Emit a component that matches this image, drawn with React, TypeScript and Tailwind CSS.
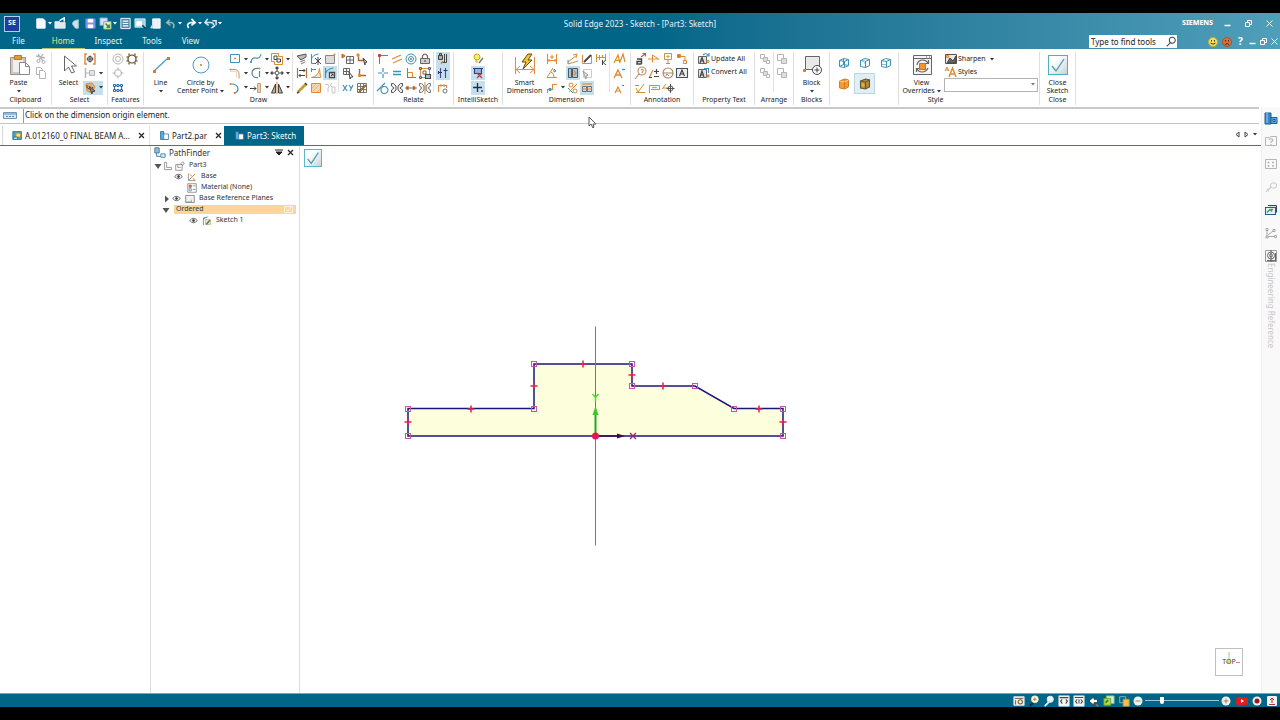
import { useState } from "react";
import type { ReactNode } from "react";

// [path, stroke, fill, strokeWidth]
type Shape = [string, string, string?, number?];

const O = "#dd8a33";
const B = "#3c93b8";
const K = "#444444";
const G = "#b5b5b5";
const N = "none";
const W = "#ffffff";

// Ribbon glyphs, all drawn on a 14x14 grid
const ICONS: Record<string, Shape[]> = {
  cut: [["M4 2l5 7M9 2L5 8M2 4l9 2", G, N, 1.3], ["M3 9a1.5 1.5 0 103 0a1.5 1.5 0 10-3 0M8 10a1.5 1.5 0 103 0a1.5 1.5 0 10-3 0", G]],
  copy: [["M2.5 1.500h4l2 2v5h-6z", G, W], ["M5.500 4.500h4l2 2v6h-6z", G, W]],
  fit: [["M4 2H2v10h2M10 2h2v10h-2", O, N, 1.4], ["M3.500 7h7M7 3.500v7M4.500 7a2.500 2.500 0 105 0a2.500 2.500 0 10-5 0", K]],
  filter: [["M2.500 2v10", G, N, 1.5], ["M3 7h3", G], ["M6.500 4.500h5v5h-5z", G, "#e3e3e3"]],
  pick: [["M3 3l6-1 3 4-3 6-5-2z", O, "#d9b489"], ["M4 4a3 3 0 106 2", K], ["M6 5l6 5-3 1 0 2z", K, "#8a8a8a"]],
  ring: [["M2 7a5 5 0 1010 0a5 5 0 10-10 0M4.500 7a2.500 2.500 0 105 0a2.500 2.500 0 10-5 0", G]],
  gear: [["M3 7a4 4 0 108 0a4 4 0 10-8 0", K, N, 1.2], ["M4 1.500v2M10 1.500v2M4 10.500v2M10 10.500v2M1.500 5h2M10.500 5h2M1.500 9h2M10.500 9h2", "#a66a2c", N, 1.6]],
  ringCross: [["M3.500 7a3.500 3.500 0 107 0a3.500 3.500 0 10-7 0M7 1.500v3M7 9.500v3M1.500 7h3M9.500 7h3", G]],
  pattern: [["M3.500 4.500h7v5h-7z", "#2c68a8"], ["M2.500 3.500h2v2h-2zM6 3.500h2v2H6zM9.500 3.500h2v2h-2zM2.500 8.500h2v2h-2zM6 8.500h2v2H6zM9.500 8.500h2v2h-2z", "#2c68a8", W]],
  rect: [["M2.500 2.500h9v8h-9z", B], ["M6.500 6h1v1h-1z", O, O]],
  fillet: [["M2 3.500h4q5 0 5 5v4", O], ["M2 5.500h6.500v6", "#dddddd"], ["M2 3h1v1H2z", O, O]],
  arc: [["M3 3q7 0 7 5 0 3-3 4", B, N, 1.2], ["M2 2.500h1v1H2zM6 11.500h1v1H6z", O, O]],
  curve: [["M2 10q1-5 5-4t5-4", B, N, 1.1], ["M1.500 9.500h1v1h-1z", B, B]],
  arcCenter: [["M10 2.500Q3 2 3 7t6 4.500", "#5b7f90", N, 1.2], ["M10.500 5v6", B, N, 1.2], ["M10 2h1v1h-1z", O, O]],
  extend: [["M1 7.500h6M5 5.500l2 2-2 2", K], ["M8.500 2.500h3v9h-3z", "#c9a27c", "#e9cfae"]],
  offset: [["M1.500 1.500h7v3h4v8h-8v-3h-3z", O], ["M4 4h3v3h3.500v3H7V7.500H4z", K]],
  move: [["M7 1v12M1 7h12M5.500 2.500L7 1l1.500 1.500M5.500 11.500L7 13l1.500-1.500M2.500 5.500L1 7l1.500 1.500M11.500 5.500L13 7l-1.500 1.500", K, N, 1.2], ["M5.500 5.500h3v3h-3z", "#777777", W]],
  mirror: [["M5.500 3v9h-4zM8.500 3l4 9h-4z", K, "#b9b2a8"], ["M7 1v12", O]],
  project: [["M2 4l9-2v3l-5 3z", "#555555", "#bbbbbb"], ["M5 10l5-2M6 12l4-2", "#777777"]],
  trimCross: [["M2.500 2v9.500h4M2.500 7q1-4 7-5", B], ["M6 6l6 6M12 6l-6 6M9 5v8", K]],
  gradientRect: [["M2.500 3.500h9v8h-9z", "#888888", "#dcdcdc"], ["M11 2h1v1h-1z", O, O]],
  spacing: [["M2.500 2v10M11.500 2v10", "#a87440", N, 1.2], ["M4 4.500h6M8.500 3l1.500 1.500L8.500 6M10 9.500H4M5.500 8L4 9.500 5.500 11", K]],
  ortho: [["M2.500 11.500q7-1 8-9l1 9z", O, "#f7e6d2"], ["M2 3.500h5M2.500 2v4", B]],
  include: [["M2.500 2v10M2.500 8q1-5 8-6", B, N, 1.2], ["M6.500 6.500h5v5h-5z", K, W, 1.3], ["M8 10l2-2M8 8h2v2", K]],
  pencil: [["M3 11L11 3", "#c49a2a", N, 2.6], ["M2 12l2-1M10 2l2 2", K, N, 1.5]],
  hatch: [["M2.500 2.500h9v9h-9z", O, "#f6d4ad"], ["M3 7l4-4M4 10l6-6M8 11l3-3", "#e9b987"]],
  hook: [["M2 3.500h3q2 2 0 4v4M9 2q-3 2 0 4h3v6H9V6", "#c8c8c8"]],
  tableArrow: [["M1 2l3 2-3 2z", "#b0642a", O], ["M5.500 4.500h7v7h-7zM5.500 8h7M9 4.500v7", "#666666"]],
  tablePick: [["M2.500 2.500h6v6h-6zM2.500 5.500h6M5.500 2.500v6", "#666666"], ["M8 6l4 5-2 0-1 2z", K, W]],
  originPick: [["M3.500 3v5.500H9", "#b0642a", N, 1.3], ["M8 6l4 4-2 1 0 2z", K, "#cccccc"], ["M2 2h2v2H2z", O, O]],
  origin: [["M4.500 3v6.500H11", "#b0642a", N, 1.4], ["M3.500 8.500h2v2h-2z", O, O]],
  xy: [["M2 4l4 6M6 4l-4 6M8 4l2 3M12 4L9 10", B, N, 1.2]],
  gridPencil: [["M2.500 2.500h9v9h-9zM2.500 5.500h9M2.500 8.500h9M5.500 2.500v9M8.500 2.500v9", "#777777"], ["M4 11l7-7", "#9a6a1c", N, 2]],
  connect: [["M3.500 12V3.500H12", B], ["M2.500 2.500h2v2h-2z", "#c04434", "#c04434"]],
  horizVert: [["M7 2v10M2 7h10", B, N, 1.2], ["M6.500 6.500h1v1h-1z", W, W]],
  tangent: [["M5 9a3.500 3.500 0 107 0a3.500 3.500 0 10-7 0M1 10l8-8", B, N, 1.1], ["M5 6h1v1H5z", O, O]],
  parallel: [["M2 7l9-4M3 11l9-4", O, N, 1.2]],
  equal: [["M3 5.500h8M3 8.500h8", B, N, 1.4]],
  symmetric: [["M1.500 2.500h2L6 5v4l-2.500 2.500h-2V9L4 7 1.500 5zM12.500 2.500h-2L8 5v4l2.500 2.500h2V9L10 7l2.500-2z", "#555555", "#eeeeee"]],
  symAxis: [["M1.500 2.500h2L6 5v4l-2.500 2.500h-2V9L4 7 1.500 5zM12.500 2.500h-2L8 5v4l2.500 2.500h2V9L10 7l2.500-2z", "#777777", "#eeeeee"], ["M7 1v12", O]],
  concentric: [["M2 7a5 5 0 1010 0a5 5 0 10-10 0M4.500 7a2.500 2.500 0 105 0a2.500 2.500 0 10-5 0", B], ["M6.500 6.500h1v1h-1z", "#c06434"]],
  perpendicular: [["M3.500 2v9.500H12", B, N, 1.1], ["M3.500 6.500h5v5", O]],
  collinear: [["M1 7h12", "#777777"], ["M3 6h1v2H3zM9.500 6h1v2h-1z", "#b0642a", O, 1.5]],
  lock: [["M4.500 6V4q2.500-4 5 0v2", "#666666", N, 1.2], ["M2.500 6.500h9v5h-9z", "#666666", "#cccccc"], ["M7 8v2", K]],
  rigid: [["M2.500 2.500h9v9h-9z", O], ["M1.500 1.500h2v2h-2zM10.500 1.500h2v2h-2zM1.500 10.500h2v2h-2zM5 5h3v3H5z", "#666666"], ["M7.500 8.500h5v4h-5z", K, "#bbbbbb", 1.1]],
  keyLock: [["M2.500 3.500h4v4h-4zM3.500 3V1.500h2V3", K, "#aaaaaa"], ["M5 10.500h5.500V2M8.500 2v8.500", K], ["M5 12l2-3", O, N, 1.3]],
  relHandles: [["M4.500 2v10M9.500 2v10", "#5c3d8f", N, 1.1], ["M2 6.500h4M7.500 4.500h4M2.500 5v3", "#173f73", N, 1.1]],
  relAssist: [["M2.500 11V4.500h8V7", O, N, 1.2], ["M5 3v3M8 3v3", O], ["M7 10a2 2 0 104 0a2 2 0 10-4 0", "#777777"]],
  bulb: [["M3 5a3 3 0 106 0a3 3 0 10-6 0M5 8v2h2", "#c8a818", "#f7ec6a"], ["M12 6l-4 5", "#777777", N, 1.4]],
  snapBox: [["M3.500 2.500h7v5h-7zM2 2.500h10", "#2a3d78", "#9cb4d8", 1.1], ["M6 7l5 5M11 7l-5 5", "#c03040", N, 1.2]],
  snapPoint: [["M6.500 2v9M2 6.500h9", "#1c2f50", N, 1.3], ["M10.500 9.500h1v1h-1z", "#8840a0", "#8840a0"]],
  dimBetween: [["M2.500 2v10M11.500 2v10M3 8.500h8M4.500 7L3 8.500 4.500 10M9.500 7L11 8.500 9.500 10", O], ["M6 4h2v2H6z", O]],
  dimAngle: [["M2 11.500L8 2M2 11.500h10M6 6q3 1 3 5", O], ["M9 3l2 2-2 1z", B]],
  dimCoord: [["M2.500 12V8.500h5v-5H12", O, N, 1.1], ["M4 7.500h2v2H4z", B]],
  dimSym: [["M2 12l10-3M2 10l9-7M7 3l4-1-1 4", O], ["M2 8v4", B]],
  tableDim: [["M2.500 2.500h3v9h-3zM6.500 2.500h5v9h-5z", "#4b5a63", "#a8c6d4"], ["M8 5l2 2-2 2", O, N, 1.2]],
  percent: [["M3 4a2 2 0 104 0a2 2 0 10-4 0M7 10a2 2 0 104 0a2 2 0 10-4 0M3 11l8-8", O], ["M2 7l5 5", B]],
  dimPencil: [["M2.500 3v8.500h9V3", O], ["M4 10l7-7", K, N, 1.8]],
  dimCursor: [["M3.500 3.500h8v8h-8z", "#cccccc", W], ["M3 5l5 4-2 1v3z", "#999999", "#eeeeee"]],
  lockDim: [["M2 3h10", O, N, 1.2], ["M2.500 5.500h4v5h-4zM7.500 5.500h4v5h-4z", "#60707a", "#d7dce0"], ["M2 8h10", O]],
  dimBreak: [["M2.500 2v8M11.500 2v6M2 5.500h10M5.500 3v5M8.500 3v3", O], ["M8.500 8v5M12 8l-3 2.500L12 13", K]],
  styleA: [["M2 11l4-8 2 8M3 8.500h5M8 10l3-8 2 8", O, N, 1.2]],
  textUp: [["M2 12l4-8 4 8M4 9h4", O, N, 1.4], ["M10 3.500h3", B, N, 1.3]],
  textDown: [["M3 12l3-6 3 6M4 10h4", O, N, 1.2], ["M10 4.500h2", B]],
  leaderA: [["M8.500 12V7H4M8.500 9.500H4v2.500h4.500", K, N, 1.4], ["M8 5l4-3M9.500 1.500H12.500v3", "#b0642a", N, 1.2]],
  balloonA: [["M5 5a4 4 0 108 0a4 4 0 10-8 0M6 8l-4 5M8 4q2-2 2 1l-1 2", "#b98a5c", N, 1.1]],
  checkSurf: [["M3 7l2 4 6-8M3 11.500h9M2 4.500h4", O]],
  leader: [["M1 7h11M5.500 10.500V3l6 4", O]],
  plusMinus: [["M2 12l4-8", O, N, 1.2], ["M7 5.500h5M9.500 3v5M7 10.500h5M2 11.500h3", K, N, 1.2]],
  tag: [["M2.500 12V4.500h10v4H4", O], ["M5 6.500h5", "#c9a27c", N, 1.4]],
  datum: [["M3.500 1.500h7v6h-7zM7 8v3M5 11.500h4", O], ["M6 4h2v1H6z", O]],
  datumRing: [["M2 7a5 5 0 1010 0a5 5 0 10-10 0M2 7h10", "#a98258", N, 1.1], ["M5 10l1-2 2 2", O]],
  weldDot: [["M2 7h6", O], ["M7 7.500a2.500 2.500 0 105 0a2.500 2.500 0 10-5 0M9.500 3v9M5.500 7.500h8", "#555555"], ["M1 8l4-5", O]],
  connector: [["M2.500 2.500h3v3h-3zM8.500 8.500h3v3h-3zM6 4.500h4v4", O], ["M3.500 3.500h1v1h-1z", "#b0642a", "#b0642a"]],
  boxA: [["M1.500 2.500h11v9h-11z", "#44505a", "#eeeeee", 1.1], ["M4.500 10l2.500-6 2.500 6M5 8h4", K, N, 1.2]],
  textUpdate: [["M1.500 4.500h8v7h-8z", "#666666", "#e4e4e4"], ["M3 11l2-5.500L7 11M3.500 9h3", K, N, 1.2], ["M6 3q3-3 6 1M12 1v3H9", B, N, 1.1], ["M10 8.500h2v2h-2z", O]],
  textConvert: [["M1.500 3.500h8v8h-8z", "#666666", "#e4e4e4"], ["M3 11l2-6 2 6M3.500 9h3", K, N, 1.2], ["M7 2.500h4.500V7", B, N, 1.1], ["M10 9h2v2h-2z", O, O]],
  arrange: [["M2.500 2.500h4v4h-4z", G, W], ["M5.500 5.500h4v4h-4z", G, "#dddddd"], ["M8.500 8.500h3v3h-3z", G, W]],
  arrangeTwo: [["M2.500 2.500h6v6h-6z", G, W], ["M6.500 6.500h5v5h-5z", G, "#dddddd"]],
  cubeWire: [["M2.500 4.500l4-2 5 1v6l-4 2-5-1zM2.500 4.500l5 1 4-2M7.500 5.500v6M6.500 2.500v6l5 1M2.500 10.500l4-2", B]],
  cubeDash: [["M2.500 4.500l4-2 5 1v6l-4 2-5-1zM2.500 4.500l5 1 4-2M7.500 5.500v6", B], ["M6.500 3v5", "#bcd9e6"]],
  cubeVisible: [["M2.500 4.500l4-2 5 1v6l-4 2-5-1zM2.500 4.500l5 1 4-2M7.500 5.500v6", B], ["M3 8.500h4", "#8cc0d6"]],
  cubeOrange: [["M2.500 4l5-2 4 1v7l-4 2-5-1z", "#d07e22", "#f39a32"], ["M2.500 4l5 1 4-2", "#ffd08a"], ["M7.500 5v7", "#d47a1c"]],
  cubeShaded: [["M2.500 4l5-2 4 1v7l-4 2-5-1z", "#5b5a35", "#b1873c", 1.1], ["M2.500 4l5 1 4-2M7.500 5v7", "#5b5a35"], ["M4 6l2 1v3l-2-1z", "#f0a23c", "#f0a23c"]],
  sharpen: [["M1.500 2.500h11v9h-11z", "#555555", "#e8e8e8"], ["M3 11l3-5 3 3 3-5v7z", K, "#666666"], ["M2.500 3.500h2v2h-2z", O, "#f6d4ad"]],
  styles: [["M1 6l2-4 2 4M2 5h3", O], ["M5 12L8.500 3 12 12M6 9h5", O, N, 1.5]],
  search: [["M5 5a3.500 3.500 0 107 0a3.500 3.500 0 10-7 0M6 8l-4 4", K, N, 1.2]],
};

// Icons of the quick access bar, side bar, tree and status bar
const CHROME: Record<string, Shape[]> = {
  newDoc: [["M3 2h7l2 2v8H3z", W, "#f2f8fb"]],
  open: [["M1 12V5h5l1 1h5v6z", "#dfeaf0", "#dfeaf0"], ["M6 4l5-3v4", W, N, 1.6]],
  back: [["M10 3q-7 1-6 5l3 4h3z", "#a9c9d8", "#cfe0e8"]],
  save: [["M2 2h10v10H2z", "#6f86d6", "#7f95e4"], ["M4.500 2.500h5v3h-5zM4.500 8.500h5v3h-5z", W, W]],
  saveAll: [["M1 1h8v8H1z", "#6f9bd6", "#d7e4f6"], ["M5 5h8v8H5z", "#8cb04e", "#e8f0d8"], ["M7 7l4 4M11 8v3H8", "#3e8a3e", N, 1.6]],
  list: [["M2 1.500h10v11H2z", W, "#4f8ba5"], ["M4 4.500h6M4 7h6M4 9.500h6", W, N, 1.2]],
  window: [["M1 2h11v9H1z", "#d5ecf6", "#a7d3e8"], ["M3 5h5v4H3z", W, W], ["M9 9l3 3", "#123d54", N, 1.6]],
  paper: [["M4 2h8v10H4z", W, "#e8f2f7"], ["M2 12l2-3", "#bcd9e6", N, 2]],
  undo: [["M6 3L3 6l4 3M3 6h5q4 1 2 6", "#a3b5ac", N, 1.7]],
  redo: [["M8 2l4 4-4 3M12 6H7Q2 7 5 12", W, N, 1.8]],
  refresh: [["M4 2L1 6l4 3M1 6h6q4 0 3 3M9 4h4v5M8 12l4-3", "#d6e8ef", N, 1.7]],
  partBlue: [["M1 2h6v11H1z", "#1c5f9e", "#3a86c8"], ["M3 2v10", "#7fb4e0", N, 1.5], ["M7 6.500h6v6H7z", "#1c5f9e", "#6ba8dc"], ["M9 8.500h2v2H9z", "#1c4f8e", "#e6f0fa"]],
  help: [["M1.500 3.500h4l1-1h6v9h-11z", G], ["M5 6q1-2 3-1t-1 3v1M7 10v1", G, N, 1.2]],
  grid4: [["M1.500 2.500h11v9h-11z", G], ["M4 5h1v1H4zM8.500 5h1v1h-1zM4 8.500h1v1H4zM8.500 8.500h1v1h-1z", G]],
  wrench: [["M2 12l5-5M7 7a3 2.500 0 105-3a3 2.500 0 10-5 3M3 9l2 2", "#cccccc", N, 1.1]],
  layers: [["M4 2.500h8.500v7", "#1c4f7e", "#cde3f5"], ["M1.500 4.500h10v7h-10z", "#245f93", "#e6f4ee", 1.1], ["M3 9.500l3-3 2 2", "#3c9a5c", N, 1.4], ["M7 6.500h2", "#c85a48", N, 1.4]],
  nodes: [["M2 2.500h2v2H2zM9 3.500h2v2H9zM2 10h2v2H2zM10.500 9.500h2v2h-2zM3 4.500V10M4 10.500h6.500M4 9l5-4", "#a8a8a8"]],
  target: [["M1.500 1.500h11v11h-11z", "#999999"], ["M3.500 6.500a3.500 3.500 0 107 0a3.500 3.500 0 10-7 0M5.500 6.500a1.500 1.500 0 103 0a1.500 1.500 0 10-3 0M7 1v12M3 11.500h8M11.500 4v8", "#666666"]],
  part: [["M2 2h4v4h5v6H2z", "#1f669c", "#62ace0"], ["M6 5h6v7H6z", "#347aa8", W]],
  assembly: [["M1 2h11v10H1z", "#237090", "#48a5bd"], ["M5 4h6v5H5z", "#b2852f", "#f7df7a"], ["M2 9h5v3H2z", "#237090", "#cbe8ef"]],
  finder: [["M1 1h5v6H1z", "#326b97", "#8fc0e4"], ["M3 7v4h5M8 8h5v4H8z", "#447da7", "#dceefb"]],
  corner: [["M2 2h3v7h7v3H2z", "#777777", W]],
  partBox: [["M1 5h9v8H1zM4 5v4h4M8 4l3-3 2 3-3 2z", "#777777", N]],
  eye: [["M1 7q6-7 12 0q-6 7-12 0z", K, W, 1.2], ["M5.500 7a1.500 1.500 0 103 0a1.500 1.500 0 10-3 0", K, K, 1.5]],
  axes: [["M2 2v10h10", "#777777"], ["M3 11L11 3M4 3l3 3M8 9l3 2", O, N, 1.3]],
  material: [["M1 1h12v12H1z", "#777777", W], ["M3 3h3v3H3z", "#b8403a", O], ["M3 8h3v3H3zM8 9h4", "#3a7ab8"], ["M8 4h4", "#777777"]],
  plane: [["M1 2h12v10H1z", "#666666", "#f2f2f2"], ["M2 11h7v-3", "#888888"]],
  sketch: [["M2 13V3q4 0 6-2M2 3l4-1", B, N, 1.2], ["M5 5h7v7H5z", "#a8b58c", "#e7ebce"], ["M6 12l5-6", "#6f7a3c", N, 2.2]],
  zoomArea: [["M1 2h12v10H1z", "#e6e6e6", "#f4efe2"], ["M2 4h10", "#555555"], ["M6 8a2.500 2.500 0 105 0a2.500 2.500 0 10-5 0M3 6v5", "#775f38", N, 1.2]],
  zoomIn: [["M6 9l-4 4", "#1c2a30", N, 2.4], ["M4 5a4 4 0 108 0a4 4 0 10-8 0", "#e7dfc2", "#fffbe8"], ["M6 5h4M8 3v4", "#b0802c", N, 1.2]],
  zoomOut: [["M7 8l-5 5", "#eaf4f8", N, 2], ["M5 5a3.500 3.500 0 107 0a3.500 3.500 0 10-7 0", "#dbe9ef", "#eaf4f8", 1.2]],
  fitView: [["M1 1h12v12H1z", "#d8d8d8", "#f8f8f8"], ["M5 5L3 7l2 3M9 5l2 2-2 3M2 3h10", "#444444", N, 1.3]],
  pan: [["M1 1h12v12H1z", "#d8d8d8", "#f8f8f8"], ["M5 5L3 7.500 5 10M9 5l2 2.500L9 10M7 5v5M2 3h10", "#444444", N, 1.2]],
  rotate: [["M1 7l6-5v3h4v4H7v3z", "#2c3e48", W, 1.1], ["M9 11l3 2", "#b06a3c", N, 2]],
  viewStyle: [["M4 1h9v9H4z", "#7bb661", "#cfe9f7"], ["M1 4h8v8H1z", "#6a9a24", "#b7dc3e"], ["M3 9l3-3", "#31702c", N, 1.8]],
  overlay: [["M2 2h7v7H2z", "#8bc0d6"], ["M6 5h7v8H6z", "#d09425", "#f5c04a"]],
};

function Shapes({ shapes }: { shapes: Shape[] }) {
  return (
    <>
      {shapes.map(([d, stroke, fill, width], i) => (
        <path key={i} d={d} stroke={stroke} fill={fill || "none"} strokeWidth={width || 1} />
      ))}
    </>
  );
}

function Icon({ name, className = "size-[14px]" }: { name: string; className?: string }) {
  return (
    <svg viewBox="0 0 14 14" className={`${className} shrink-0`} aria-hidden="true">
      <Shapes shapes={ICONS[name] || CHROME[name]} />
    </svg>
  );
}

function Caret({ className = "text-[#333]" }: { className?: string }) {
  return (
    <svg viewBox="0 0 4 3" className={`h-[3px] w-[4px] shrink-0 ${className}`} aria-hidden="true">
      <path d="M0 0h4L2 2.500z" fill="currentColor" />
    </svg>
  );
}

function Tool({ name, menu, active }: { name: string; menu?: boolean; active?: boolean }) {
  return (
    <button type="button" aria-label={name} className={`flex h-[14px] items-center gap-[2px] ${active ? "bg-[#c5e0ec]" : ""}`}>
      <Icon name={name} />
      {menu && <Caret />}
    </button>
  );
}

// Three-row block of small tools; "+" after a name adds a menu caret, "!" marks it pressed
function Tools({ names, className }: { names: string[]; className: string }) {
  return (
    <div className={`grid grid-flow-col grid-rows-3 content-start ${className}`}>
      {names.map((n) => (
        <Tool key={n} name={n.replace(/[+!]/g, "")} menu={n.includes("+")} active={n.includes("!")} />
      ))}
    </div>
  );
}

function Split() {
  return <div className="mx-px h-[40px] w-px bg-[#e2e2e2]" />;
}

function BigTool({ lines, menu, className, children }: { lines: string[]; menu?: boolean; className?: string; children: ReactNode }) {
  return (
    <button type="button" className={`flex h-[43px] flex-col items-center whitespace-nowrap ${className || ""}`}>
      <svg viewBox="0 0 26 26" className="mb-px size-[26px] shrink-0" fill="none" aria-hidden="true">
        {children}
      </svg>
      {lines.map((line, i) => (
        <span key={line} className="flex items-center gap-[2px] leading-[8px]">
          {line}
          {menu && lines.length === 2 && i === 1 && <Caret />}
        </span>
      ))}
      {menu && lines.length === 1 && (
        <span className="flex h-[8px] items-center">
          <Caret />
        </span>
      )}
    </button>
  );
}

function Group({ label, className, children }: { label: string; className: string; children: ReactNode }) {
  return (
    <section aria-label={label} className={`flex shrink-0 flex-col border-r border-[#dedede] ${className}`}>
      <div className="flex h-[43px]">{children}</div>
      <div className="text-center leading-[10px]">{label}</div>
    </section>
  );
}

function CheckTile() {
  return (
    <>
      <defs>
        <linearGradient id="tile" x1="0" y1="0" x2="1" y2="1">
          <stop offset="0.3" stopColor="#fff" />
          <stop offset="1" stopColor="#c9d1d4" />
        </linearGradient>
      </defs>
      <rect x="3.500" y="3.500" width="19" height="19" fill="url(#tile)" stroke="#4bb0c4" />
      <path d="M7 14l4 5 8-12" stroke="#3f9fb4" strokeWidth="1.300" />
    </>
  );
}

function Ribbon() {
  return (
    <div className="flex h-[58px] overflow-hidden bg-white pt-[3px] pb-[2px] text-[7px] text-[#1d1d1d]">
      <Group label="Clipboard" className="w-[52px]">
        <BigTool lines={["Paste"]} menu className="ml-[3px] w-[31px]">
          <path d="M4.500 5.500h15v17h-15z" fill="#ccc8c3" stroke="#98928c" />
          <path d="M7 8h10v12H7z" fill="#f0efee" />
          <path d="M8.500 3.500h7v4h-7z" fill="#e49a35" stroke="#b8772a" />
          <path d="M13.500 10.500h6l4 4v8h-10z" fill="#fff" stroke="#888" />
          <path d="M19.500 10.500v4h4" stroke="#888" />
        </BigTool>
        <Tools names={["cut", "copy"]} className="" />
      </Group>
      <Group label="Select" className="w-[56px]">
        <BigTool lines={["Select"]} className="ml-[2px] w-[29px]">
          <path d="M8.500 4v15l4-4 3 6 3-1-3-6h5z" fill="#fff" stroke="#666" />
        </BigTool>
        <Tools names={["fit", "filter+", "pick+!"]} className="" />
      </Group>
      <Group label="Features" className="w-[36px]">
        <Tools names={["ring", "ringCross", "pattern", "gear"]} className="ml-[3px] w-[28px]" />
      </Group>
      <Group label="Draw" className="w-[230px]">
        <BigTool lines={["Line"]} menu className="w-[33px]">
          <path d="M6 19L20 6" stroke="#4b9bbd" strokeWidth="1.200" />
          <path d="M5 18h3v3H5zM19 5h3v3h-3z" fill="#d97f1f" />
        </BigTool>
        <BigTool lines={["Circle by", "Center Point"]} menu className="w-[47px]">
          <circle cx="13" cy="13" r="8" stroke="#4b9bbd" />
          <path d="M12.500 12.500h1v1h-1z" fill="#d97f1f" stroke="#d97f1f" />
        </BigTool>
        <Tools names={["rect+", "fillet+", "arc+", "curve+", "arcCenter+", "extend+", "offset+", "move+", "mirror+"]} className="ml-[4px] w-[63px]" />
        <Split />
        <Tools names={["project", "spacing", "pencil", "trimCross", "ortho", "hatch", "gradientRect", "include!", "hook"]} className="ml-px" />
        <Split />
        <Tools names={["tableArrow", "tablePick", "xy", "originPick", "origin", "gridPencil"]} className="ml-px" />
      </Group>
      <Group label="Relate" className="w-[80px]">
        <Tools
          names={["connect", "horizVert", "tangent", "parallel", "equal", "symmetric", "concentric", "perpendicular", "collinear", "lock", "rigid", "symAxis"]}
          className="ml-[2px]"
        />
        <Split />
        <Tools names={["keyLock!", "relHandles!", "relAssist"]} className="ml-px" />
      </Group>
      <Group label="IntelliSketch" className="w-[49px]">
        <Tools names={["bulb", "snapBox!", "snapPoint!"]} className="mx-auto" />
      </Group>
      <Group label="Dimension" className="w-[128px]">
        <BigTool lines={["Smart", "Dimension"]} className="ml-px w-[41px]">
          <path d="M3.500 5v17M22.500 5v17" stroke="#df8c4b" />
          <path d="M4 17.500h18M8 14l-4 3.500L8 21M18 14l4 3.500-4 3.500" stroke="#df8c4b" />
          <path d="M16 2l-6 8h4l-3 7 9-9h-4l4-6z" fill="#f6c431" stroke="#5a4a20" />
        </BigTool>
        <Tools names={["dimBetween", "dimAngle", "dimCoord+"]} className="w-[21px]" />
        <Tools names={["dimSym", "tableDim!", "percent", "dimPencil", "dimCursor", "lockDim!", "dimBreak"]} className="" />
        <Split />
        <Tools names={["styleA", "textUp", "textDown"]} className="ml-px" />
      </Group>
      <Group label="Annotation" className="w-[63px]">
        <Tools
          names={["leaderA", "balloonA", "checkSurf", "leader", "plusMinus", "tag", "datum", "datumRing", "weldDot", "connector", "boxA"]}
          className="ml-[2px]"
        />
      </Group>
      <Group label="Property Text" className="w-[61px]">
        <div className="ml-[3px] flex flex-col">
          <button type="button" className="flex h-[14px] items-center whitespace-nowrap">
            <Icon name="textUpdate" />
            Update All
          </button>
          <button type="button" className="flex h-[13px] items-center whitespace-nowrap">
            <Icon name="textConvert" />
            Convert All
          </button>
        </div>
      </Group>
      <Group label="Arrange" className="w-[39px]">
        <div className="ml-[3px] flex flex-col">
          <Tool name="arrange" />
          <Tool name="arrange" />
        </div>
        <Split />
        <div className="flex flex-col">
          <Tool name="arrangeTwo" />
          <Tool name="arrangeTwo" />
        </div>
      </Group>
      <Group label="Blocks" className="w-[36px]">
        <BigTool lines={["Block"]} menu className="mx-auto">
          <path d="M6.500 4.500h14v13h-14z" fill="#e9e9e9" stroke="#666" />
          <path d="M4.500 17.500h2v2h-2z" fill="#d97f1f" stroke="#d97f1f" />
          <circle cx="18" cy="18" r="4.500" fill="#fff" stroke="#444" />
          <path d="M15.500 18h5M18 15.500v5" stroke="#444" />
        </BigTool>
      </Group>
      <section aria-label="View styles" className="w-[69px] shrink-0 border-r border-[#dedede]">
        <div className="ml-[3px] grid w-[63px] grid-cols-3">
          {["cubeWire", "cubeDash", "cubeVisible", "cubeOrange", "cubeShaded"].map((n) => (
            <button
              key={n}
              type="button"
              aria-label={n}
              className={`grid h-[21px] place-items-center ${n === "cubeShaded" ? "border border-[#bcd6e2] bg-[#e1eef4]" : ""}`}
            >
              <Icon name={n} />
            </button>
          ))}
        </div>
      </section>
      <Group label="Style" className="w-[141px] [&>div:last-child]:pr-[67px]">
        <BigTool lines={["View", "Overrides"]} menu className="w-[45px]">
          <path d="M4.500 3.500h18v19h-18z" fill="#f4f4f4" stroke="#666" />
          <path d="M4.500 6.500h18M17 5h1M20 5h1" stroke="#666" />
          <path d="M8 13q1-5 6-5 3 0 5 3M19.500 8v3.500H16M19 16q-2 4-6 4-3 0-5-3M7.500 20v-3.500H11" stroke="#666" strokeWidth="1.200" />
          <path d="M10.500 11.500h6v6h-6z" fill="#f3962c" stroke="#c8761d" />
        </BigTool>
        <div className="flex flex-col">
          <button type="button" className="flex h-[14px] items-center whitespace-nowrap">
            <Icon name="sharpen" />
            Sharpen
            <span className="w-[4px]" />
            <Caret />
          </button>
          <button type="button" className="flex h-[12px] items-center whitespace-nowrap">
            <Icon name="styles" />
            Styles
          </button>
          <div className="relative">
            <select aria-label="Style" className="block h-[14px] w-[94px] appearance-none border border-[#b4b4b4] bg-white px-[2px]">
              <option></option>
            </select>
            <div className="pointer-events-none absolute top-[5px] right-[3px] flex">
              <Caret className="text-[#777]" />
            </div>
          </div>
        </div>
      </Group>
      <Group label="Close" className="w-[36px]">
        <BigTool lines={["Close", "Sketch"]} className="mx-auto">
          <CheckTile />
        </BigTool>
      </Group>
    </div>
  );
}

function WindowButtons({ small }: { small?: boolean }) {
  const size = small ? "size-[11px]" : "size-[21px]";
  const box = small ? "0 0 11 11" : "-5 -5 21 21";
  return (
    <div className="flex text-white">
      <button type="button" aria-label="Minimize">
        <svg viewBox={box} className={size}><path d="M2.500 7.500h6" stroke="currentColor" strokeWidth="1.500" /></svg>
      </button>
      <button type="button" aria-label="Restore">
        <svg viewBox={box} className={size}><path d="M2.500 4.500h4v4h-4zM4.500 4V2.500h4v4H7" stroke="currentColor" fill="none" /></svg>
      </button>
      <button type="button" aria-label="Close">
        <svg viewBox={box} className={size}><path d="M2.500 2.500l6 6M8.500 2.500l-6 6" stroke="currentColor" /></svg>
      </button>
    </div>
  );
}

function Face({ sad }: { sad?: boolean }) {
  return (
    <button type="button" aria-label={sad ? "Send a frown" : "Send a smile"}>
      <svg viewBox="0 0 14 14" className="size-[14px]">
        <circle cx="7" cy="7" r="4.500" fill={sad ? "#d9703a" : "#f5e05e"} stroke={sad ? "#a9502a" : "#c3a93c"} />
        <path d="M5.500 5v1.500M8.500 5v1.500" stroke="#333" />
        <path d={sad ? "M5 9.500q2-2 4 0" : "M4.500 8q2.500 2.500 5 0"} stroke="#333" fill="none" />
      </svg>
    </button>
  );
}

const MENU = ["File", "Home", "Inspect", "Tools", "View"];

function Header() {
  const [tab, setTab] = useState("Home");

  return (
    <header className="bg-linear-to-r from-[#006587] from-50% to-[#4f9fba] text-[#e6f3f8]">
      <div className="grid h-[21px] grid-cols-[1fr_auto_1fr] items-center">
        <div className="flex items-center pl-[4px]">
          <div className="mr-[13px] flex size-[16px] items-center justify-center border border-[#b4cdf0] bg-[#1c3f9c] text-[7px] font-bold text-white">SE</div>
          {["newDoc+", "open", "back", "save", "saveAll+", "list", "window", "paper", "undo+", "redo+", "refresh+"].map((n) => (
            <button key={n} type="button" aria-label={n.replace("+", "")} className="flex items-center gap-px px-px">
              <Icon name={n.replace("+", "")} className="size-[13px]" />
              {n.includes("+") && <Caret className="text-white" />}
            </button>
          ))}
        </div>
        <h1 className="text-[8px]">Solid Edge 2023 - Sketch - [Part3: Sketch]</h1>
        <div className="flex items-center justify-end">
          <span className="mr-[4px] text-[7px] font-extrabold text-white">SIEMENS</span>
          <WindowButtons />
        </div>
      </div>
      <div className="flex h-[15px] items-center justify-between">
        <nav className="flex h-full pl-[2px] text-[8px]">
          {MENU.map((m) => (
            <button
              key={m}
              type="button"
              onClick={() => setTab(m)}
              className={`border-b px-[10px] leading-[14px] first:mr-[7px] ${m === tab ? "border-[#b9c36c] text-[#e6e88c]" : "border-transparent"}`}
            >
              {m}
            </button>
          ))}
        </nav>
        <div className="flex items-center">
          <label className="mr-[29px] flex h-[13px] w-[88px] items-center bg-white pl-[2px]">
            <input aria-label="Type to find tools" placeholder="Type to find tools" className="w-0 flex-1 text-[8px] text-black outline-none placeholder:text-[#222] placeholder:opacity-100" />
            <Icon name="search" className="size-[12px]" />
          </label>
          <Face />
          <Face sad />
          <button type="button" aria-label="Help" className="w-[13px] text-[10px] leading-[13px] font-bold text-white">?</button>
          <WindowButtons small />
        </div>
      </div>
    </header>
  );
}

function DocTab({ icon, title, active, className }: { icon: string; title: string; active?: boolean; className: string }) {
  return (
    <div className={`flex h-[19px] items-center text-[8px] ${active ? "bg-[#006587] text-white" : "text-[#222]"} ${className}`}>
      <button type="button" className="flex flex-1 items-center gap-[2px] whitespace-nowrap">
        <Icon name={icon} className="size-[11px]" />
        {title}
      </button>
      {!active && (
        <button type="button" aria-label={`Close ${title}`}>
          <Cross />
        </button>
      )}
    </div>
  );
}

function Cross() {
  return (
    <svg viewBox="0 0 7 7" className="size-[7px]">
      <path d="M1 1l5 5M6 1L1 6" stroke="#222" strokeWidth="1.200" />
    </svg>
  );
}

function Arrow({ open }: { open?: boolean }) {
  return (
    <svg viewBox="0 0 8 8" className="size-[8px] shrink-0">
      <path d={open ? "M0.500 2h7L4 7z" : "M2 0.500v7L6 4z"} fill="#555" />
    </svg>
  );
}

const TREE = [
  { label: "Part3", pad: "pl-[3px]", arrow: "open", icons: ["corner", "partBox"] },
  { label: "Base", pad: "pl-[22px]", arrow: "", icons: ["eye", "axes"] },
  { label: "Material (None)", pad: "pl-[35px]", arrow: "", icons: ["material"] },
  { label: "Base Reference Planes", pad: "pl-[12px]", arrow: "closed", icons: ["eye", "plane"] },
  { label: "Ordered", pad: "pl-[11px]", arrow: "open", icons: [] },
  { label: "Sketch 1", pad: "pl-[37px]", arrow: "", icons: ["eye", "sketch"] },
];

function PathFinder() {
  return (
    <aside className="w-[150px] shrink-0 border-x border-[#dcdcdc] text-[7px] text-[#333]">
      <div className="flex h-[14px] items-center pr-[5px] pb-px pl-[3px] text-[8px]">
        <Icon name="finder" className="size-[12px]" />
        <h2 className="ml-[3px] flex-1">PathFinder</h2>
        <button type="button" aria-label="Options" className="mr-[4px]">
          <svg viewBox="0 0 8 7" className="h-[7px] w-[8px]">
            <path d="M0 1h8M1 3h6L4 6z" stroke="#222" fill="#222" />
          </svg>
        </button>
        <button type="button" aria-label="Close PathFinder" className="flex">
          <Cross />
        </button>
      </div>
      <ul>
        {TREE.map((row) => (
          <li key={row.label} className={`flex h-[11px] items-center whitespace-nowrap ${row.pad}`}>
            {row.arrow && <Arrow open={row.arrow === "open"} />}
            {row.label === "Ordered" ? (
              <span className="mr-[3px] ml-[4px] flex h-[9px] flex-1 items-center justify-between bg-[#fbd698] pr-[3px] pl-[2px]">
                {row.label}
                <svg viewBox="0 0 9 7" className="h-[7px] w-[9px]">
                  <path d="M0.500 0.500h8v6h-8zM2 3l2 2 3-4" stroke="#fff4dc" fill="none" />
                </svg>
              </span>
            ) : (
              <>
                {row.icons.map((n) => (
                  <Icon key={n} name={n} className={n === "eye" ? "mr-[3px] ml-px size-[9px]" : "mx-px size-[10px]"} />
                ))}
                <span className="ml-[3px]">{row.label}</span>
              </>
            )}
          </li>
        ))}
      </ul>
    </aside>
  );
}

const CORNERS = [[408, 409], [408, 436], [534, 409], [534, 364], [632, 364], [632, 386], [695, 386], [734, 409], [783, 409], [783, 436]];
const RELATIONS = [[471, 409], [408, 422], [534, 386], [583, 364], [632, 375], [663, 386], [759, 409], [783, 422]];

function Sketch() {
  return (
    <svg viewBox="400 320 390 230" className="absolute top-[174px] left-[100px] h-[230px] w-[390px]" fill="none" aria-label="Sketch profile">
      <path d="M408 436V408.500H534V364H632V386H695L734 408.500H783V436z" fill="#fdfedb" stroke="#17177e" strokeWidth="1.500" />
      <path d="M595.500 326.500V545.500" stroke="#777" />
      {CORNERS.map(([x, y]) => (
        <rect key={`${x}-${y}`} x={x - 2.5} y={y - 2.5} width="5" height="5" stroke="#c955a4" />
      ))}
      {RELATIONS.map(([x, y]) => (
        <path key={`${x}-${y}`} d={`M${x - 3.5} ${y}h7M${x} ${y - 3.5}v7`} stroke="#db2355" strokeWidth="1.500" />
      ))}
      <path d="M595.500 433V413" stroke="#22a822" strokeWidth="2" />
      <path d="M595.500 406l3 9h-6z" fill="#3bcb24" />
      <path d="M592.500 394l3 3.500 3-3.500M595.500 397.500v4" stroke="#4be02c" strokeWidth="1.500" />
      <path d="M599 436h22" stroke="#3a0c4a" strokeWidth="1.500" />
      <path d="M617 433.500l8 2.500-8 2.500z" fill="#3a0c4a" />
      <path d="M630 433l6 6M636 433l-6 6" stroke="#9a1c6c" strokeWidth="1.200" />
      <circle cx="595.500" cy="436" r="3.500" fill="#e3164f" />
    </svg>
  );
}

function Canvas() {
  return (
    <main className="relative flex-1 overflow-hidden bg-white">
      <button type="button" aria-label="Accept sketch" className="mt-[3px] ml-[4px] block">
        <svg viewBox="3 3 20 20" className="size-[18px]" fill="none">
          <CheckTile />
        </svg>
      </button>
      <Sketch />
      <button type="button" aria-label="View orientation" className="absolute right-[18px] bottom-[17px] grid size-[28px] place-items-center border border-[#c2bfc4] text-[7px] text-[#444]">
        <svg viewBox="0 0 26 26" className="col-start-1 row-start-1 size-[26px]" fill="none">
          <path d="M13 11V4M12 4h2" stroke="#8fe07c" />
          <path d="M20 13.500h4" stroke="#df7f8c" />
          <circle cx="13" cy="13" r="2" fill="#e2e25a" />
        </svg>
        <span className="col-start-1 row-start-1">TOP</span>
      </button>
    </main>
  );
}

const SIDE = ["partBlue", "help", "grid4", "wrench", "layers", "nodes", "target"];

function SideBar() {
  return (
    <aside className="flex w-[19px] shrink-0 flex-col items-center border-l border-[#f0f0f0] bg-[#f9f9f9]">
      {SIDE.map((n) => (
        <button key={n} type="button" aria-label={n} className="grid h-[23px] shrink-0 place-items-center pb-px">
          <Icon name={n} />
        </button>
      ))}
      <span className="-mt-[5px] text-[8px] leading-[10px] whitespace-nowrap text-[#c6c6c6] [writing-mode:vertical-rl]">Engineering Reference</span>
    </aside>
  );
}

const STATUS = ["zoomArea", "zoomIn", "zoomOut", "fitView", "pan", "rotate", "viewStyle", "overlay"];

function StatusBar() {
  const [zoom, setZoom] = useState(22);

  return (
    <footer className="flex h-[14px] items-center justify-end gap-[2px] border-t border-[#6ea9c0] bg-[#006587] pr-[3px]">
      {STATUS.map((n) => (
        <button key={n} type="button" aria-label={n} className="w-[13px]">
          <Icon name={n} className="size-[12px]" />
        </button>
      ))}
      <button type="button" aria-label="Zoom out" className="w-[10px]">
        <svg viewBox="0 0 10 10" className="size-[10px]">
          <circle cx="5" cy="5" r="4.500" fill="#f1f1f1" />
          <path d="M2.500 5h5" stroke="#c07a52" />
        </svg>
      </button>
      <input
        type="range"
        aria-label="Zoom"
        value={zoom}
        onChange={(e) => setZoom(Number(e.target.value))}
        className="h-px w-[74px] appearance-none bg-[#9dc5d5] [&::-webkit-slider-thumb]:h-[7px] [&::-webkit-slider-thumb]:w-[4px] [&::-webkit-slider-thumb]:appearance-none [&::-webkit-slider-thumb]:rounded-b-sm [&::-webkit-slider-thumb]:bg-white"
      />
      <button type="button" aria-label="Zoom in" className="w-[13px]">
        <svg viewBox="0 0 10 10" className="size-[10px]">
          <circle cx="5" cy="5" r="4.500" fill="#f1f1f1" />
          <path d="M2.500 5h5M5 2.500v5" stroke="#c07a52" />
        </svg>
      </button>
      <button type="button" aria-label="YouTube" className="w-[14px]">
        <svg viewBox="0 0 12 10" className="h-[10px] w-[12px]">
          <rect y="1" width="12" height="8" rx="2.500" fill="#e01b22" />
          <path d="M5 3l3 2-3 2z" fill="#fff" />
        </svg>
      </button>
      <button type="button" aria-label="Record" className="w-[13px]">
        <svg viewBox="0 0 10 10" className="size-[10px]">
          <circle cx="5" cy="5" r="4.500" fill="#f1f1f1" />
          <circle cx="5" cy="5" r="2.500" fill="#a01420" />
        </svg>
      </button>
      <button type="button" aria-label="Upload">
        <svg viewBox="0 0 10 10" className="size-[10px]">
          <rect width="10" height="10" rx="1" fill="#f4f0f0" />
          <path d="M5 7V2M3 4l2-2 2 2M2 8.500h6" stroke="#a33" fill="none" />
        </svg>
      </button>
    </footer>
  );
}

export default function App() {
  return (
    <div className="flex min-h-screen flex-col overflow-hidden bg-white py-[13px] font-['Noto_Sans','Open_Sans',sans-serif] shadow-[inset_0_13px_#000,inset_0_-13px_#000]">
      <Header />
      <Ribbon />
      <div className="flex flex-1">
        <div className="flex min-w-0 flex-1 flex-col">
          <div className="relative mr-[2px] flex h-[17px] items-start border-t-2 border-b border-t-[#c9c9c9] border-b-[#c4c4c4]">
            <svg viewBox="0 0 14 7" className="mx-[3px] mt-[3px] h-[7px] w-[14px]">
              <path d="M0.500 0.500h13v6H0.500z" fill="#dbe9f6" stroke="#7393b5" />
              <path d="M1 2h12M3 4.500h2M6 4.500h2M9 4.500h2" stroke="#5d86b5" />
            </svg>
            <output className="ml-[3px] flex-1 border-l border-[#999] pb-[2px] pl-px text-[8px] leading-[12px] text-[#222]">Click on the dimension origin element.</output>
            <svg viewBox="0 0 10 13" className="absolute top-[7px] left-[588px] z-10 h-[13px] w-[10px]">
              <path d="M1 1v9l2-2 2 4 1-1-1-3h3z" fill="#fff" stroke="#555" />
            </svg>
          </div>
          <div className="flex h-[22px] items-end border-b border-[#3b7892]">
            <DocTab icon="assembly" title="A.012160_0 FINAL BEAM A..." className="ml-[2px] w-[147px] border-l border-[#d8d8d8] pr-[4px] pl-[9px]" />
            <DocTab icon="part" title="Part2.par" className="w-[75px] border-l border-[#e4e4e4] pr-[2px] pl-[9px]" />
            <DocTab icon="part" title="Part3: Sketch" active className="w-[80px] pl-[10px]" />
            <div className="ml-auto flex h-full items-center gap-[4px] pr-[4px]">
              <button type="button" aria-label="Previous tab">
                <svg viewBox="0 0 5 7" className="h-[7px] w-[5px]"><path d="M4 1v5L1 3.500z" fill="none" stroke="#444" /></svg>
              </button>
              <button type="button" aria-label="Next tab">
                <svg viewBox="0 0 5 7" className="h-[7px] w-[5px]"><path d="M1 1v5l3-2.500z" fill="none" stroke="#444" /></svg>
              </button>
              <button type="button" aria-label="Tab list">
                <Caret />
              </button>
            </div>
          </div>
          <div className="flex flex-1">
            <div className="w-[150px] shrink-0" />
            <PathFinder />
            <Canvas />
          </div>
        </div>
        <SideBar />
      </div>
      <StatusBar />
    </div>
  );
}
